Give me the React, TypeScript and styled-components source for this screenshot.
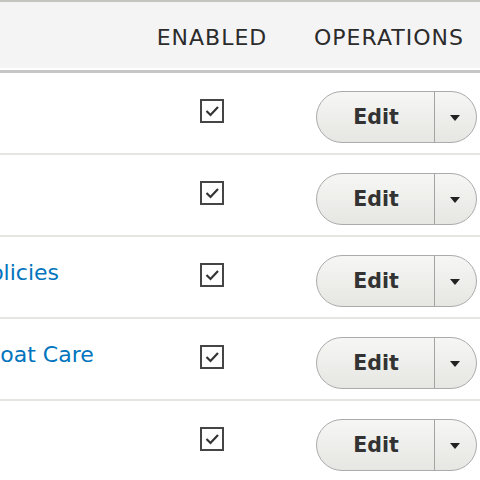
import React from "react";
import styled, { createGlobalStyle } from "styled-components";

const Global = createGlobalStyle`
  html, body { margin: 0; padding: 0; background: #fff; }
  body { font-family: "DejaVu Sans", "Liberation Sans", sans-serif; color: #333; }
`;

const Viewport = styled.div`
  width: 480px;
  height: 480px;
  overflow: hidden;
  background: #fff;
`;

const Table = styled.div`
  margin-left: -109px;
  width: 620px;
  border-top: 2px solid #c4c4c0;
`;

const Row = styled.div<{ $head?: boolean }>`
  display: grid;
  grid-template-columns: 259px 124px 1fr;
  height: ${(p) => (p.$head ? "68px" : "80px")};
  background: ${(p) => (p.$head ? "#f5f4f5" : "#fff")};
  border-bottom: ${(p) => (p.$head ? "3px solid #c6c6c6" : "2px solid #e6e5e2")};
  box-shadow: ${(p) => (p.$head ? "inset 0 -2px 0 #fff" : "none")};
`;

const HeadCell = styled.div<{ $center?: boolean }>`
  display: flex;
  align-items: center;
  justify-content: ${(p) => (p.$center ? "center" : "flex-start")};
  padding-left: ${(p) => (p.$center ? "0" : "40px")};
  padding-top: 3px;
  font-size: 22px;
  letter-spacing: 1px;
  text-transform: uppercase;
  color: #2b2b2b;
`;

const NameCell = styled.div`
  padding-top: 23px;
  font-size: 22px;
  white-space: nowrap;
`;

const Link = styled.a`
  color: #0074bd;
  text-decoration: none;
`;

const CheckCell = styled.div`
  display: flex;
  justify-content: center;
  padding-top: 26px;
`;

const CheckBox = styled.span`
  box-sizing: border-box;
  width: 24px;
  height: 24px;
  border: 2px solid #454545;
  display: flex;
  align-items: center;
  justify-content: center;
  background: #fff;
`;

const OpsCell = styled.div`
  padding-left: 42px;
  padding-top: 18px;
`;

const DropButton = styled.div`
  display: inline-flex;
  height: 52px;
  box-sizing: border-box;
  border: 1.5px solid #ababab;
  border-radius: 26px;
  background: linear-gradient(to bottom, #f6f6f4, #e6e6e3);
  overflow: hidden;
`;

const Action = styled.span`
  width: 116px;
  display: flex;
  align-items: center;
  justify-content: center;
  padding-left: 1px;
  font-size: 20.5px;
  font-weight: 700;
  color: #333;
  border-right: 1.5px solid #a3a3a3;
`;

const Toggle = styled.span`
  width: 39px;
  display: flex;
  align-items: center;
  justify-content: center;
  padding-right: 2px;
`;

const Arrow = styled.span`
  width: 0;
  height: 0;
  border-left: 5px solid transparent;
  border-right: 5px solid transparent;
  border-top: 6px solid #222;
  margin-top: 2px;
`;

const rows = ["About Us", "Contact", "Privacy Policies", "Healthy Goat Care", "FAQ"];

export default function App() {
  return (
    <>
      <Global />
      <Viewport>
        <Table>
          <Row $head>
            <HeadCell>Title</HeadCell>
            <HeadCell $center>Enabled</HeadCell>
            <HeadCell>Operations</HeadCell>
          </Row>
          {rows.map((r) => (
            <Row key={r}>
              <NameCell>
                <Link href="#">{r}</Link>
              </NameCell>
              <CheckCell>
                <CheckBox>
                  <svg width="18" height="18" viewBox="0 0 18 18">
                    <path d="M3.5 9 L7.5 13 L15 5" fill="none" stroke="#333" strokeWidth="2.2" />
                  </svg>
                </CheckBox>
              </CheckCell>
              <OpsCell>
                <DropButton>
                  <Action>Edit</Action>
                  <Toggle>
                    <Arrow />
                  </Toggle>
                </DropButton>
              </OpsCell>
            </Row>
          ))}
        </Table>
      </Viewport>
    </>
  );
}
